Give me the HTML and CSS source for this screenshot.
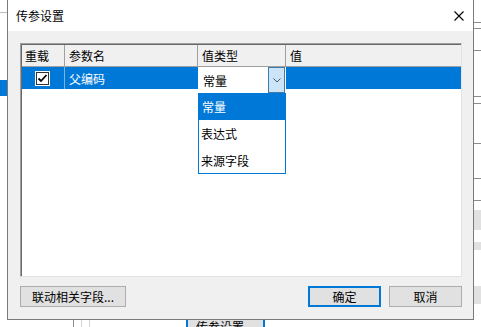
FILE: index.html
```html
<!DOCTYPE html>
<html lang="zh-CN">
<head>
    <meta charset="UTF-8">
    <title>传参设置</title>
    <link rel="stylesheet" href="styles.css">
</head>
<body>

<div class="desk">
    <div class="side-left">
        <div class="left-line"></div>
        <div class="left-sel"></div>
    </div>

    <div class="dialog">
        <div class="titlebar">
            <span class="title">传参设置</span>
            <svg class="close" width="10" height="10" viewBox="0 0 10 10">
                <path d="M0.5 0.5 L9.5 9.5 M9.5 0.5 L0.5 9.5" stroke="#000" stroke-width="1.1" fill="none"/>
            </svg>
        </div>

        <div class="content">
            <div class="list">
                <div class="row head">
                    <div class="cell c1">重载</div>
                    <div class="cell c2">参数名</div>
                    <div class="cell c3">值类型</div>
                    <div class="cell c4">值</div>
                </div>
                <div class="row sel">
                    <div class="cell c1">
                        <span class="check">
                            <svg width="11" height="11" viewBox="0 0 11 11">
                                <path d="M1.5 5.5 L4 8 L9.5 2" stroke="#000" stroke-width="1.8" fill="none"/>
                            </svg>
                        </span>
                    </div>
                    <div class="cell c2">父编码</div>
                    <div class="cell c3">
                        <div class="combo">
                            <span class="combo-text">常量</span>
                            <span class="combo-btn">
                                <svg width="8" height="5" viewBox="0 0 8 5">
                                    <path d="M0.5 0.5 L4 4 L7.5 0.5" stroke="#555" stroke-width="1" fill="none"/>
                                </svg>
                            </span>
                            <div class="popup">
                                <div class="item active">常量</div>
                                <div class="item">表达式</div>
                                <div class="item">来源字段</div>
                            </div>
                        </div>
                    </div>
                    <div class="cell c4"></div>
                </div>
            </div>

            <div class="buttons">
                <button class="btn wide">联动相关字段...</button>
                <button class="btn primary push">确定</button>
                <button class="btn">取消</button>
            </div>
        </div>
    </div>

    <div class="side-right">
        <div class="rline" style="margin-top: 22px"></div>
        <div class="rline" style="margin-top: 5px"></div>
        <div class="rline" style="margin-top: 21px"></div>
        <div class="rline" style="margin-top: 45px"></div>
        <div class="rline" style="margin-top: 6px"></div>
        <div class="rline" style="margin-top: 39px"></div>
        <div class="rline" style="margin-top: 34px"></div>
        <div class="rline" style="margin-top: 21px"></div>
        <div class="rbox" style="margin-top: 9px; height: 20px"></div>
        <div class="rbox" style="margin-top: 12px; height: 8px"></div>
        <div class="rbox" style="margin-top: 36px; height: 18px"></div>
    </div>

    <div class="bottom">
        <div class="bline dark"></div>
        <div class="bline"></div>
        <div class="bline"></div>
        <div class="tab">传参设置</div>
    </div>
</div>

</body>
</html>
```

FILE: styles.css
```css
body {
    margin: 0;
    background: #fff;
    font-family: "Noto Sans CJK SC", "Noto Sans", sans-serif;
    font-size: 12px;
    color: #000;
    overflow: hidden;
}
.desk {
    display: grid;
    grid-template-columns: 7px 467px 7px;
    grid-template-rows: 320px 7px;
    width: 481px;
    height: 327px;
    overflow: hidden;
}

/* what is left visible of the window behind */
.side-left {
    grid-column: 1;
    grid-row: 1;
}
.left-line {
    margin-top: 12px;
    height: 1px;
    background: #bdbdbd;
}
.left-sel {
    margin-top: 67px;
    height: 16px;
    background: #0078d7;
}
.side-right {
    grid-column: 3;
    grid-row: 1;
    display: flex;
    flex-direction: column;
}
.rline {
    height: 1px;
    background: #8c8c8c;
}
.rbox {
    background: #e1e1e1;
}
.bottom {
    grid-column: 1 / -1;
    grid-row: 2;
    display: flex;
    overflow: hidden;
}
.bline {
    width: 1px;
    margin-left: 7px;
    background: #d4d4d4;
}
.bline.dark {
    margin-left: 73px;
    background: #8c8c8c;
}
.tab {
    margin-left: 96px;
    width: 75px;
    height: 14px;
    padding: 1px 0 0 8px;
    box-sizing: border-box;
    border-left: 2px solid #0078d7;
    border-right: 2px solid #0078d7;
    background: #e1e1e1;
    width: 79px;
    line-height: 12px;
    white-space: nowrap;
}

/* dialog window */
.dialog {
    grid-column: 2;
    grid-row: 1;
    box-sizing: border-box;
    border: 1px solid #7a7a7a;
    border-top: none;
    display: flex;
    flex-direction: column;
}
.titlebar {
    height: 31px;
    flex: none;
    background: #fff;
    display: flex;
    align-items: center;
    justify-content: space-between;
    padding: 0 9px 0 8px;
}
.content {
    flex: 1;
    background: #f0f0f0;
    padding: 12px 11px 0 12px;
}

/* list view */
.list {
    height: 234px;
    box-sizing: border-box;
    background: #fff;
    border: 1px solid #e3e3e3;
    border-top-color: #a0a0a0;
    border-left-color: #a0a0a0;
    box-shadow: inset 1px 1px #696969;
    padding: 1px 0 0 1px;
}
.row {
    display: flex;
}
.cell {
    box-sizing: border-box;
    display: flex;
    align-items: center;
    white-space: nowrap;
}
.c1 { width: 43px; }
.c2 { width: 133px; }
.c3 { width: 88px; }
.c4 { width: 175px; }

.head {
    height: 21px;
    background: #f0f0f0;
    border-bottom: 1px solid #a0a0a0;
}
.head .cell {
    border-right: 1px solid #a0a0a0;
    padding-left: 4px;
}
.head .c1 { padding-left: 3px; }
.head .c4 { border-right: none; }

.sel {
    height: 22px;
    align-items: flex-start;
    color: #fff;
}
.sel .cell {
    height: 22px;
    background: #0078d7;
}
.sel .c1 {
    justify-content: center;
    border-right: 1px solid #7fb2e0;
    padding-right: 1px;
}
.sel .c2 { padding-left: 4px; }
.sel .c3 {
    background: transparent;
    align-items: flex-start;
}
.check {
    width: 15px;
    height: 15px;
    box-sizing: border-box;
    border: 1px solid #fff;
    outline: 1px solid #333;
    outline-offset: -2px;
    background: #fff;
    display: flex;
    align-items: center;
    justify-content: center;
}

/* combo box in the cell */
.combo {
    position: relative;
    width: 87px;
    height: 26px;
    display: flex;
    background: #fff;
    color: #000;
}
.combo-text {
    flex: 1;
    display: flex;
    align-items: center;
    padding-left: 5px;
}
.combo-btn {
    width: 17px;
    box-sizing: border-box;
    background: #cce4f7;
    border: 1px solid #3d7bad;
    display: flex;
    align-items: center;
    justify-content: center;
}
.popup {
    position: absolute;
    top: 26px;
    left: 0;
    width: 88px;
    box-sizing: border-box;
    border: 1px solid #0078d7;
    border-top: none;
    background: #fff;
}
.item {
    height: 27px;
    display: flex;
    align-items: center;
    padding-left: 2px;
}
.item:last-child { height: 26px; }
.item.active {
    background: #0078d7;
    color: #fff;
    padding-left: 3px;
}

/* buttons */
.buttons {
    display: flex;
    gap: 8px;
    margin-top: 9px;
}
.btn {
    width: 73px;
    height: 21px;
    box-sizing: border-box;
    padding: 0;
    background: #e1e1e1;
    border: 1px solid #adadad;
    font-family: inherit;
    font-size: 12px;
    color: #000;
}
.btn.wide {
    width: 106px;
}
.btn.primary {
    border: 2px solid #0078d7;
}
.push {
    margin-left: auto;
}
```
